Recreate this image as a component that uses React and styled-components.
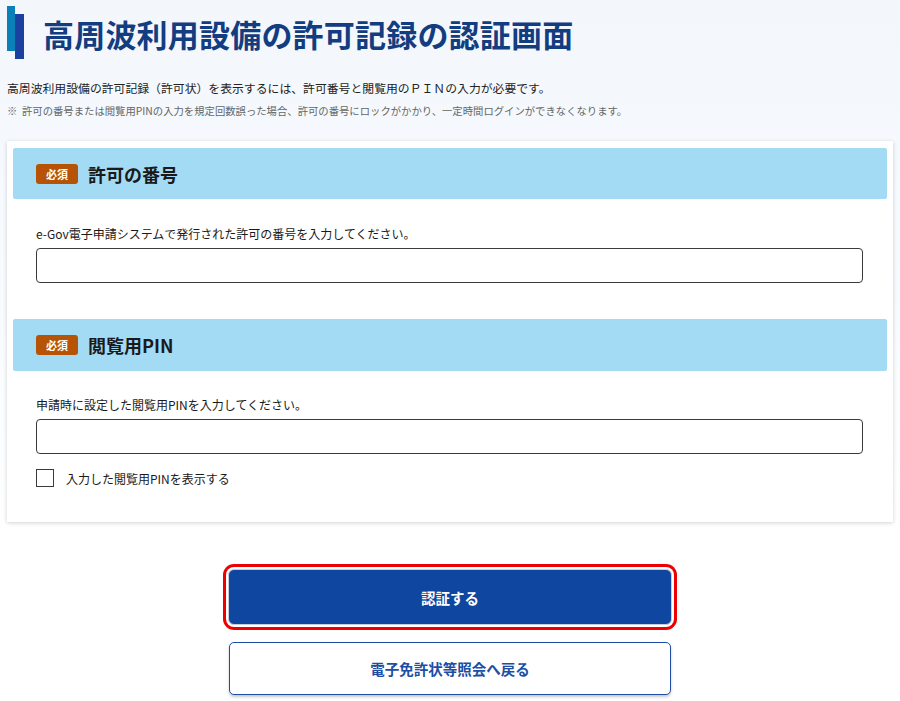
import React from 'react'
import styled, { createGlobalStyle } from "styled-components";

const GlobalStyle = createGlobalStyle`
    * {
        box-sizing: border-box;
    }
    body {
        margin: 0;
        font-family: "Noto Sans CJK JP", "Noto Sans", sans-serif;
        color: #1a1a1a;
        background: linear-gradient(180deg, #f3f7fc 0px, #f8fbfe 300px, #ffffff 540px);
        min-height: 701px;
    }
`;

const Page = styled.main`
    padding: 0 7px 20px;
`;

const TitleRow = styled.header`
    display: flex;
    align-items: flex-start;
    gap: 19px;
    height: 66px;
`;

const Bars = styled.div`
    display: flex;
    margin-top: 6px;
`;

const Bar = styled.span`
    display: block;
    width: ${(p) => p.$w}px;
    height: 45px;
    margin-top: ${(p) => p.$top}px;
    background: ${(p) => p.$color};
`;

const Title = styled.h1`
    margin: 12px 0 0;
    font-size: 31px;
    line-height: 44px;
    font-weight: 700;
    color: #123d80;
    letter-spacing: 0.2px;
`;

const Lead = styled.p`
    margin: 13px 0 0;
    font-size: 11.85px;
    line-height: 18px;
    color: #222;
`;

const Note = styled.p`
    margin: 6px 0 0;
    font-size: 10.35px;
    line-height: 15px;
    color: #666;
`;

const Card = styled.section`
    margin-top: 23px;
    background: #fff;
    padding: 7px 6px;
    box-shadow: 0 1px 4px rgba(0, 0, 0, 0.18);
`;

const FieldHead = styled.div`
    display: flex;
    align-items: center;
    gap: 10px;
    height: ${(p) => p.$h}px;
    padding-left: 23px;
    background: #a3dbf5;
    border-radius: 2px;
`;

const Badge = styled.span`
    display: inline-flex;
    align-items: center;
    justify-content: center;
    width: 42px;
    height: 20px;
    border-radius: 3px;
    background: #b65305;
    color: #fff;
    font-size: 11px;
    font-weight: 700;
`;

const FieldName = styled.h2`
    margin: 0;
    font-size: 18px;
    font-weight: 700;
    color: #1a1a1a;
`;

const FieldBody = styled.div`
    padding: ${(p) => p.$top}px 24px ${(p) => p.$bottom}px 23px;
`;

const Label = styled.label`
    display: block;
    font-size: 12px;
    line-height: 18px;
    color: #1a1a1a;
`;

const Input = styled.input`
    display: block;
    width: 100%;
    height: 35px;
    margin-top: 5px;
    border: 1px solid #3a3a3a;
    border-radius: 4px;
    background: #fff;
    font-size: 14px;
`;

const CheckRow = styled.label`
    display: flex;
    align-items: center;
    gap: 12px;
    margin-top: 15px;
    font-size: 12px;
    color: #1a1a1a;
`;

const Box = styled.span`
    width: 18px;
    height: 18px;
    border: 1px solid #3a3a3a;
    background: #fff;
`;

const Actions = styled.div`
    display: flex;
    flex-direction: column;
    align-items: center;
    gap: 17px;
    margin-top: 47px;
`;

const PrimaryButton = styled.button`
    width: 444px;
    height: 56px;
    border: 1px solid #c9cfd9;
    border-radius: 6px;
    background: #0f46a0;
    color: #fff;
    font-family: inherit;
    font-size: 14.5px;
    font-weight: 700;
    box-shadow: 0 0 0 2px #fff, 0 0 0 5px #ee0000;
    cursor: pointer;
`;

const SecondaryButton = styled.button`
    width: 442px;
    height: 53px;
    border: 1px solid #1d4ea3;
    border-radius: 5px;
    background: #fff;
    color: #1d4ea3;
    font-family: inherit;
    font-size: 14.5px;
    font-weight: 700;
    box-shadow: 0 2px 3px rgba(0, 0, 0, 0.22);
    cursor: pointer;
`;

const App = () => {
  return (
    <>
      <GlobalStyle />
      <Page>
        <TitleRow>
          <Bars>
            <Bar $w={8} $top={0} $color="#0a80b8" />
            <Bar $w={9} $top={8} $color="#1a41a0" />
          </Bars>
          <Title>高周波利用設備の許可記録の認証画面</Title>
        </TitleRow>
        <Lead>高周波利用設備の許可記録（許可状）を表示するには、許可番号と閲覧用のＰＩＮの入力が必要です。</Lead>
        <Note>※&nbsp;&nbsp;許可の番号または閲覧用PINの入力を規定回数誤った場合、許可の番号にロックがかかり、一定時間ログインができなくなります。</Note>

        <Card>
          <FieldHead $h={51}>
            <Badge>必須</Badge>
            <FieldName>許可の番号</FieldName>
          </FieldHead>
          <FieldBody $top={26} $bottom={36}>
            <Label>e-Gov電子申請システムで発行された許可の番号を入力してください。</Label>
            <Input type="text" />
          </FieldBody>

          <FieldHead $h={52}>
            <Badge>必須</Badge>
            <FieldName>閲覧用PIN</FieldName>
          </FieldHead>
          <FieldBody $top={25} $bottom={28}>
            <Label>申請時に設定した閲覧用PINを入力してください。</Label>
            <Input type="password" />
            <CheckRow>
              <Box />
              入力した閲覧用PINを表示する
            </CheckRow>
          </FieldBody>
        </Card>

        <Actions>
          <PrimaryButton>認証する</PrimaryButton>
          <SecondaryButton>電子免許状等照会へ戻る</SecondaryButton>
        </Actions>
      </Page>
    </>
  )
}

export default App
